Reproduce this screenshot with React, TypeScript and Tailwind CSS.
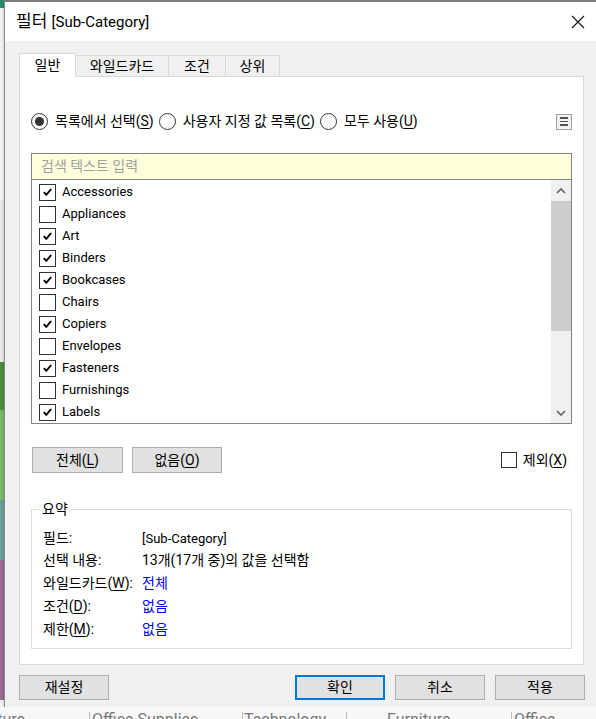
import React from 'react';

const items: [string, boolean][] = [
  ['Accessories', true],
  ['Appliances', false],
  ['Art', true],
  ['Binders', true],
  ['Bookcases', true],
  ['Chairs', false],
  ['Copiers', true],
  ['Envelopes', false],
  ['Fasteners', true],
  ['Furnishings', false],
  ['Labels', true],
];

const U = ({ children }: { children: React.ReactNode }) => (
  <span className="underline underline-offset-2 decoration-1">{children}</span>
);

const Check = ({ on }: { on: boolean }) => (
  <span className="w-[17px] h-[17px] border border-[#333] bg-white flex items-center justify-center shrink-0">
    {on && (
      <svg width="11" height="10" viewBox="0 0 11 10">
        <path d="M1.8 5.2 L4.3 7.8 L9.2 2" stroke="#000" strokeWidth="1.9" fill="none" />
      </svg>
    )}
  </span>
);

const Radio = ({ on }: { on: boolean }) => (
  <span className="w-[17px] h-[17px] rounded-full border border-[#333] bg-white flex items-center justify-center shrink-0">
    {on && <span className="w-[9px] h-[9px] rounded-full bg-[#333]" />}
  </span>
);

const Btn = ({ children, primary }: { children: React.ReactNode; primary?: boolean }) => (
  <button
    className={
      primary
        ? 'w-[90px] h-[25px] bg-[#e1e1e1] border-2 border-[#0078d7] text-[14px] text-black'
        : 'w-[90px] h-[25px] bg-[#e1e1e1] border border-[#adadad] text-[14px] text-black'
    }
  >
    {children}
  </button>
);

const LeftStrip = () => (
  <div className="w-[4px] flex flex-col shrink-0">
    <div className="h-[8px] bg-[#2a8f6a]" />
    <div className="h-[192px] bg-[#f3f3f3]" />
    <div className="h-[162px] bg-[#e9e9e9]" />
    <div className="h-[48px] bg-[#4f8d3f]" />
    <div className="h-[90px] bg-[#7db96a]" />
    <div className="h-[60px] bg-[#6f9e9b]" />
    <div className="h-[140px] bg-[#9b6b95]" />
    <div className="flex-1 bg-[#f3f3f3]" />
  </div>
);

const BottomStrip = () => (
  <div className="h-[12px] overflow-hidden bg-[#f7f7f7] flex text-[16px] leading-[16px] text-[#777] pt-[5px] whitespace-nowrap">
    <div className="w-[90px] border-r border-[#bbb] flex justify-end pr-[64px] overflow-hidden">Furniture</div>
    <div className="w-[153px] border-r border-[#bbb] pl-[2px] overflow-hidden">Office Supplies</div>
    <div className="w-[104px] border-r border-[#bbb] pl-[1px] overflow-hidden">Technology</div>
    <div className="w-[165px] border-r border-[#bbb] pl-[40px] overflow-hidden">Furniture</div>
    <div className="flex-1 pl-[2px] overflow-hidden">Office</div>
  </div>
);

const summary: [React.ReactNode, React.ReactNode, boolean, string][] = [
  ['필드:', <span className="text-[13px]">[Sub-Category]</span>, false, 'h-[22px]'],
  ['선택 내용:', '13개(17개 중)의 값을 선택함', false, 'h-[22px]'],
  [<>와일드카드(<U>W</U>):</>, '전체', true, 'h-[24px]'],
  [<>조건(<U>D</U>):</>, '없음', true, 'h-[23px]'],
  [<>제한(<U>M</U>):</>, '없음', true, 'h-[23px]'],
];

export default function App() {
  return (
    <div className="w-[596px] h-[719px] overflow-hidden bg-white flex flex-col font-['Roboto','Noto_Sans_CJK_KR',sans-serif] text-black">
      <div className="flex h-[707px]">
        <LeftStrip />
        <div className="flex-1 flex flex-col border-l border-[#8a8a8a] border-t-[2px] border-t-[#7a7a7a] shadow-[0_2px_3px_rgba(0,0,0,0.25)]">
          {/* title bar */}
          <div className="h-[39px] bg-white flex items-center justify-between pl-[11px] pr-[11px] shrink-0">
            <span className="text-[17px]">
              필터 <span className="text-[15px]">[Sub-Category]</span>
            </span>
            <svg width="14" height="14" viewBox="0 0 14 14">
              <path d="M1 1 L13 13 M13 1 L1 13" stroke="#111" strokeWidth="1.1" />
            </svg>
          </div>

          {/* body */}
          <div className="flex-1 bg-[#f0f0f0] pt-[12px] pl-[14px] pr-[12px] flex flex-col">
            {/* tabs */}
            <div className="flex items-end h-[24px] text-[14px] relative z-10">
              <div className="w-[57px] h-[24px] bg-white border border-b-0 border-[#d9d9d9] flex items-center justify-center">
                일반
              </div>
              <div className="w-[93px] h-[21px] border-t border-r border-[#d9d9d9] flex items-center justify-center mb-[1px]">
                와일드카드
              </div>
              <div className="w-[57px] h-[21px] border-t border-r border-[#d9d9d9] flex items-center justify-center mb-[1px]">
                조건
              </div>
              <div className="w-[54px] h-[21px] border-t border-r border-[#d9d9d9] flex items-center justify-center mb-[1px]">
                상위
              </div>
            </div>

            {/* panel */}
            <div className="h-[589px] -mt-[1px] bg-white border border-[#d9d9d9] px-[11px] pt-[36px] flex flex-col">
              <div className="flex items-center h-[17px] text-[14px]">
                <Radio on />
                <span className="ml-[7px] mr-[5px]">
                  목록에서 선택(<U>S</U>)
                </span>
                <Radio on={false} />
                <span className="ml-[7px] mr-[5px]">
                  사용자 지정 값 목록(<U>C</U>)
                </span>
                <Radio on={false} />
                <span className="ml-[7px]">
                  모두 사용(<U>U</U>)
                </span>
                <span className="ml-auto w-[16px] h-[16px] border border-[#a0a0a0] bg-[#f3f3f3] flex flex-col items-center justify-center gap-[2px]">
                  <span className="w-[8px] h-[1.5px] bg-[#555]" />
                  <span className="w-[8px] h-[1.5px] bg-[#555]" />
                  <span className="w-[8px] h-[1.5px] bg-[#555]" />
                </span>
              </div>

              {/* search */}
              <div className="mt-[23px] h-[27px] border border-[#828282] bg-[#ffffdc] flex items-center pl-[9px] text-[14px] text-[#a0a0a0]">
                검색 텍스트 입력
              </div>

              {/* list */}
              <div className="h-[244px] border border-t-0 border-[#828282] flex">
                <div className="flex-1 flex flex-col pt-[1px]">
                  {items.map(([name, on]) => (
                    <div key={name} className="h-[22px] flex items-center pl-[7px] gap-[6px] text-[13px]">
                      <Check on={on} />
                      <span>{name}</span>
                    </div>
                  ))}
                </div>
                <div className="w-[20px] bg-[#f0f0f0] flex flex-col">
                  <div className="h-[21px] flex items-center justify-center">
                    <svg width="10" height="6" viewBox="0 0 10 6">
                      <path d="M1 5 L5 1 L9 5" stroke="#606060" strokeWidth="1.6" fill="none" />
                    </svg>
                  </div>
                  <div className="h-[130px] bg-[#cdcdcd]" />
                  <div className="flex-1" />
                  <div className="h-[21px] flex items-center justify-center">
                    <svg width="10" height="6" viewBox="0 0 10 6">
                      <path d="M1 1 L5 5 L9 1" stroke="#606060" strokeWidth="1.6" fill="none" />
                    </svg>
                  </div>
                </div>
              </div>

              {/* buttons */}
              <div className="mt-[23px] flex items-center pl-[1px]">
                <button className="w-[91px] h-[26px] bg-[#e1e1e1] border border-[#adadad] text-[14px]">
                  전체(<U>L</U>)
                </button>
                <button className="ml-[9px] w-[90px] h-[26px] bg-[#e1e1e1] border border-[#adadad] text-[14px]">
                  없음(<U>O</U>)
                </button>
                <div className="ml-auto flex items-center mr-[5px] text-[14px]">
                  <span className="w-[16px] h-[16px] border border-[#333] bg-white" />
                  <span className="ml-[6px]">
                    제외(<U>X</U>)
                  </span>
                </div>
              </div>

              {/* summary */}
              <fieldset className="mt-[26px] border border-[#dcdcdc] pl-[11px] pt-[7px] h-[150px] text-[14px]">
                <legend className="-ml-[4px] px-[3px] text-[14px]">요약</legend>
                {summary.map(([label, value, blue, h], i) => (
                  <div key={i} className={`${h} flex items-center`}>
                    <span className="w-[99px]">{label}</span>
                    <span className={blue ? 'text-[#0000ff]' : ''}>{value}</span>
                  </div>
                ))}
              </fieldset>
            </div>

            {/* footer */}
            <div className="mt-[10px] flex items-center">
              <Btn>재설정</Btn>
              <div className="ml-auto flex gap-[10px] -mr-[1px]">
                <Btn primary>확인</Btn>
                <Btn>취소</Btn>
                <Btn>적용</Btn>
              </div>
            </div>
          </div>
        </div>
      </div>
      <BottomStrip />
    </div>
  );
}
